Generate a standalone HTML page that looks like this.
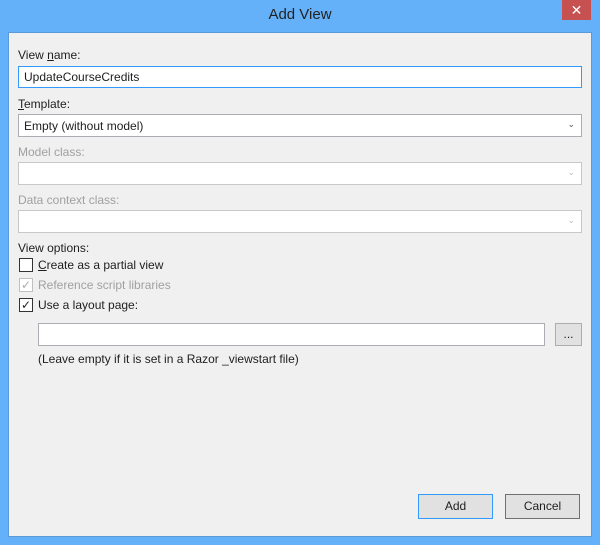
<!DOCTYPE html>
<html><head><style>
*{box-sizing:border-box;margin:0;padding:0}
body{width:600px;height:545px;background:#64b1f9;font-family:"Liberation Sans",sans-serif;font-size:12px;color:#1e1e1e;position:relative;overflow:hidden}
.abs{position:absolute}
.title{left:0;top:6px;width:600px;text-align:center;font-size:15px;color:#222}
.close{left:562px;top:0;width:29px;height:20px;background:#c75050;color:#fff;text-align:center;font-size:14px;line-height:20px}
.client{left:8px;top:32px;width:584px;height:505px;background:#f0f0f0;border:1px solid #5a9ad8}
.lbl{font-size:12px}
.dis{color:#a0a0a0}
.box{background:#fff;border:1px solid #abadb3}
.sel .arr{position:absolute;right:6px;top:4px;font-size:9px;color:#555}
.cb{width:14px;height:14px;border:1px solid #333;background:#fff;font-size:12px;line-height:12px;text-align:center}
.btn{background:#e1e1e1;border:1px solid #adadad;text-align:center;line-height:22px;font-size:12px}
u{text-decoration:underline}
</style></head><body>
<div class="abs title">Add View</div>
<div class="abs close">✕</div>
<div class="abs client"></div>
<div class="abs lbl" style="left:18px;top:48px">View <u>n</u>ame:</div>
<div class="abs box" style="left:18px;top:66px;width:564px;height:22px;border-color:#3399ff;padding:3px 5px">UpdateCourseCredits</div>
<div class="abs lbl" style="left:18px;top:97px"><u>T</u>emplate:</div>
<div class="abs box sel" style="left:18px;top:114px;width:564px;height:23px;padding:4px 5px">Empty (without model)<span class="arr">&#8964;</span></div>
<div class="abs lbl dis" style="left:18px;top:145px">Model class:</div>
<div class="abs box sel" style="left:18px;top:162px;width:564px;height:23px;border-color:#c8c8c8"><span class="arr" style="color:#bbb">&#8964;</span></div>
<div class="abs lbl dis" style="left:18px;top:193px">Data context class:</div>
<div class="abs box sel" style="left:18px;top:210px;width:564px;height:23px;border-color:#c8c8c8"><span class="arr" style="color:#bbb">&#8964;</span></div>
<div class="abs lbl" style="left:18px;top:241px">View options:</div>
<div class="abs cb" style="left:19px;top:258px"></div>
<div class="abs lbl" style="left:38px;top:258px"><u>C</u>reate as a partial view</div>
<div class="abs cb" style="left:19px;top:278px;border-color:#c0c0c0;color:#aaa">✓</div>
<div class="abs lbl dis" style="left:38px;top:278px">Reference script libraries</div>
<div class="abs cb" style="left:19px;top:298px">✓</div>
<div class="abs lbl" style="left:38px;top:298px">Use a layout page:</div>
<div class="abs box" style="left:38px;top:323px;width:507px;height:23px"></div>
<div class="abs btn" style="left:555px;top:323px;width:27px;height:23px;line-height:20px">...</div>
<div class="abs lbl" style="left:38px;top:352px">(Leave empty if it is set in a Razor _viewstart file)</div>
<div class="abs btn" style="left:418px;top:494px;width:75px;height:25px;border-color:#3399ff">Add</div>
<div class="abs btn" style="left:505px;top:494px;width:75px;height:25px;border-color:#707070">Cancel</div>
</body></html>
